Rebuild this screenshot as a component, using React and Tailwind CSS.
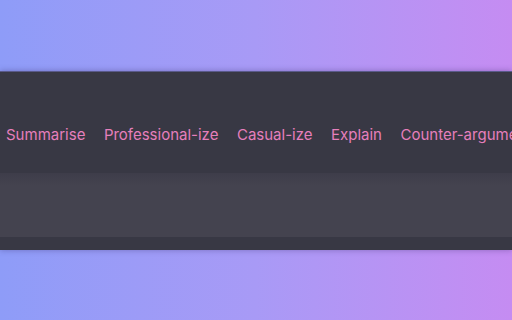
export default function App() {
  const items = ["Summarise", "Professional-ize", "Casual-ize", "Explain", "Counter-argument"];
  return (
    <div className="h-screen w-full flex flex-col justify-center bg-gradient-to-r from-[#8e9cf8] via-[#a89af6] to-[#c58cf2]" style={{ fontFamily: "Inter, 'Noto Sans', sans-serif" }}>
      <div className="h-[179px] w-full flex flex-col border-t border-[#5a5a8a] bg-[#383844] shadow-[0_0_6px_rgba(40,30,90,0.35)]">
        <div className="h-[101px] flex items-end pb-[28px] overflow-hidden">
          <div className="flex gap-[18.5px] pl-[6px] whitespace-nowrap text-[15px] leading-[20px] text-[#e67fbc]">
            {items.map((t) => (
              <span key={t}>{t}</span>
            ))}
          </div>
        </div>
        <div className="h-[64px] bg-gradient-to-b from-[#3e3d4a] to-[#44434f] to-[20%]" />
        <div className="flex-1 bg-[#383844]" />
      </div>
    </div>
  );
}
